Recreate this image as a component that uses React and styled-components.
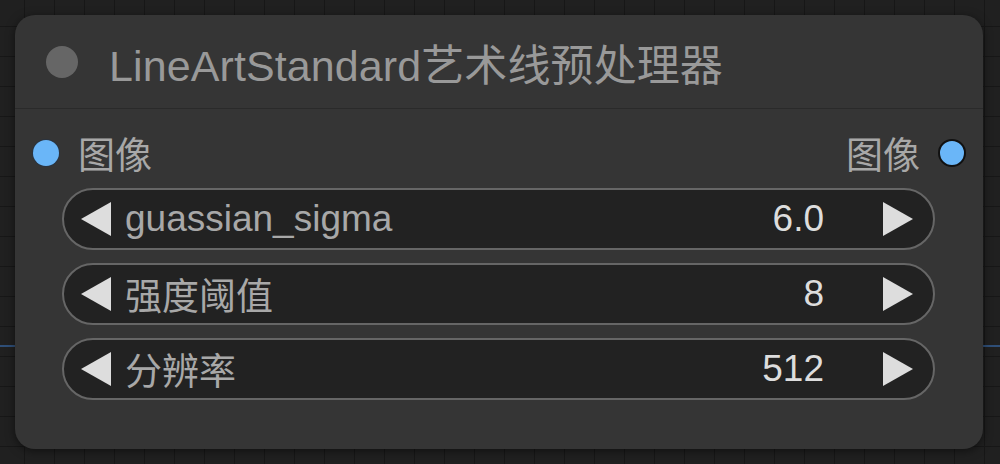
import React from "react";
import styled, { createGlobalStyle } from "styled-components";

const GlobalStyle = createGlobalStyle`
  html, body {
    margin: 0;
    padding: 0;
  }
  body {
    width: 1000px;
    height: 464px;
    overflow: hidden;
    background-color: #202020;
    background-image:
      linear-gradient(#171717 1px, transparent 1px),
      linear-gradient(90deg, #171717 1px, transparent 1px);
    background-size: 30px 30px;
    background-position: -6px -4px;
    font-family: "Liberation Sans", Arial, "Noto Sans CJK SC", sans-serif;
  }
`;

const Canvas = styled.div`
  position: relative;
  width: 1000px;
  height: 464px;
  padding: 15px 17px 15px 15px;
  box-sizing: border-box;
`;

const Wire = styled.div`
  position: absolute;
  left: 0;
  right: 0;
  top: ${(p) => p.top}px;
  height: 2px;
  background: #2f4f78;
`;

const Node = styled.div`
  position: relative;
  height: 434px;
  background: #353535;
  border-radius: 20px;
  box-shadow: 0 2px 10px rgba(0, 0, 0, 0.5);
  display: flex;
  flex-direction: column;
`;

const Title = styled.div`
  height: 93px;
  display: flex;
  align-items: center;
  padding-left: 31px;
  border-bottom: 1px solid #2a2a2a;
  gap: 31px;
`;

const TitleDot = styled.span`
  width: 32px;
  height: 32px;
  border-radius: 50%;
  background: #666;
`;

const TitleText = styled.span`
  font-size: 43px;
  color: #999;
  letter-spacing: 0.1px;
`;

const Body = styled.div`
  padding: 16px 48px 0 18px;
  display: flex;
  flex-direction: column;
`;

const SlotRow = styled.div`
  height: 56px;
  display: flex;
  align-items: center;
  justify-content: space-between;
  margin-right: -31px;
  margin-bottom: 7px;
`;

const Slot = styled.div`
  display: flex;
  align-items: center;
  gap: ${(p) => (p.out ? "18px" : "19px")};
  font-size: 37px;
  color: #a8a8a8;
`;

const SlotDot = styled.span`
  width: ${(p) => (p.out ? "24px" : "26px")};
  height: ${(p) => (p.out ? "24px" : "26px")};
  border-radius: 50%;
  background: #6ab6f8;
  border: ${(p) => (p.out ? "2px solid #111" : "0")};
  box-shadow: ${(p) => (p.out ? "none" : "0 0 0 1px #2a3440")};
`;

const Widgets = styled.div`
  display: flex;
  flex-direction: column;
  gap: 13px;
  padding-left: 29px;
`;

const Widget = styled.div`
  height: 62px;
  box-sizing: border-box;
  border: 2px solid #666;
  border-radius: 31px;
  background: #222;
  display: flex;
  align-items: center;
  padding: 0 20px 0 17px;
  font-size: 37px;
`;

const Arrow = styled.span`
  width: 0;
  height: 0;
  border-top: 17px solid transparent;
  border-bottom: 17px solid transparent;
  ${(p) =>
    p.right
      ? "border-left: 30px solid #ddd;"
      : "border-right: 30px solid #ddd;"}
`;

const Label = styled.span`
  flex: 1;
  margin-left: 14px;
  color: #a8a8a8;
`;

const Value = styled.span`
  color: #ddd;
  margin-right: 59px;
`;

const widgets = [
  { name: "guassian_sigma", value: "6.0" },
  { name: "强度阈值", value: "8" },
  { name: "分辨率", value: "512" },
];

const App = () => {
  return (
    <>
      <GlobalStyle />
      <Canvas>
        <Wire top={345} />
        <Node>
          <Title>
            <TitleDot />
            <TitleText>LineArtStandard艺术线预处理器</TitleText>
          </Title>
          <Body>
            <SlotRow>
              <Slot>
                <SlotDot />
                图像
              </Slot>
              <Slot out>
                图像
                <SlotDot out />
              </Slot>
            </SlotRow>
            <Widgets>
              {widgets.map((w) => (
                <Widget key={w.name}>
                  <Arrow />
                  <Label>{w.name}</Label>
                  <Value>{w.value}</Value>
                  <Arrow right />
                </Widget>
              ))}
            </Widgets>
          </Body>
        </Node>
      </Canvas>
    </>
  );
};

export default App;
